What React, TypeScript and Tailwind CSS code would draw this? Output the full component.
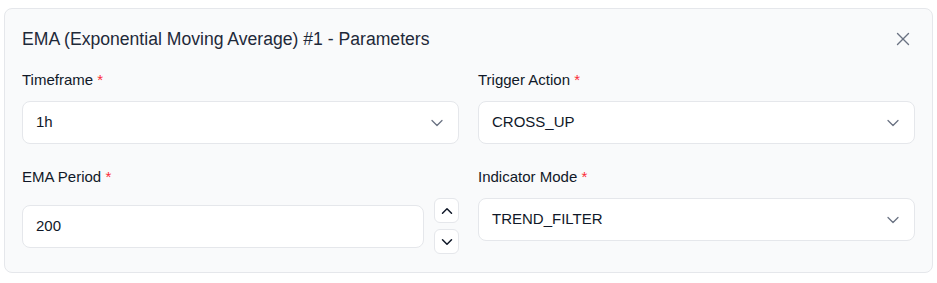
import React from "react";
import { ChevronDown, ChevronUp, X } from "lucide-react";

function Label({ text }: { text: string }) {
  return (
    <div className="text-[15px] leading-5 text-gray-900 mb-[11px]">
      {text} <span className="text-red-500">*</span>
    </div>
  );
}

function SelectBox({ value }: { value: string }) {
  return (
    <div className="h-[43px] rounded-lg border border-gray-200 bg-white pl-[13px] pr-[11px] flex items-center justify-between text-[15px] text-gray-900">
      <span>{value}</span>
      <ChevronDown size={20} strokeWidth={1.5} className="text-gray-500" />
    </div>
  );
}

export default function App() {
  return (
    <div className="bg-white min-h-screen pt-2 px-1" style={{ fontFamily: '"Liberation Sans", Arial, sans-serif' }}>
      <div className="border border-gray-200 rounded-lg bg-gray-50 pt-4 px-[17px] pb-[18px]">
        {/* header */}
        <div className="h-7 flex items-center justify-between mb-[17px]">
          <h2 className="text-[17.6px] leading-7 text-gray-800">EMA (Exponential Moving Average) #1 - Parameters</h2>
          <button className="w-6 h-6 flex items-center justify-center text-gray-500">
            <X size={22} strokeWidth={1.5} />
          </button>
        </div>

        <div className="grid grid-cols-2 gap-x-[19px] gap-y-[23px]">
          <div>
            <Label text="Timeframe" />
            <SelectBox value="1h" />
          </div>
          <div>
            <Label text="Trigger Action" />
            <SelectBox value="CROSS_UP" />
          </div>
          <div>
            <Label text="EMA Period" />
            <div className="flex items-center gap-[10px]">
              <div className="flex-1 h-[43px] rounded-lg border border-gray-200 bg-white px-[13px] flex items-center text-[15px] text-gray-900">
                200
              </div>
              <div className="flex flex-col gap-[6px]">
                <button className="w-[25px] h-[25px] rounded-md border border-gray-200 bg-white flex items-center justify-center text-gray-900">
                  <ChevronUp size={18} strokeWidth={2} />
                </button>
                <button className="w-[25px] h-[25px] rounded-md border border-gray-200 bg-white flex items-center justify-center text-gray-900">
                  <ChevronDown size={18} strokeWidth={2} />
                </button>
              </div>
            </div>
          </div>
          <div>
            <Label text="Indicator Mode" />
            <SelectBox value="TREND_FILTER" />
          </div>
        </div>
      </div>
    </div>
  );
}
